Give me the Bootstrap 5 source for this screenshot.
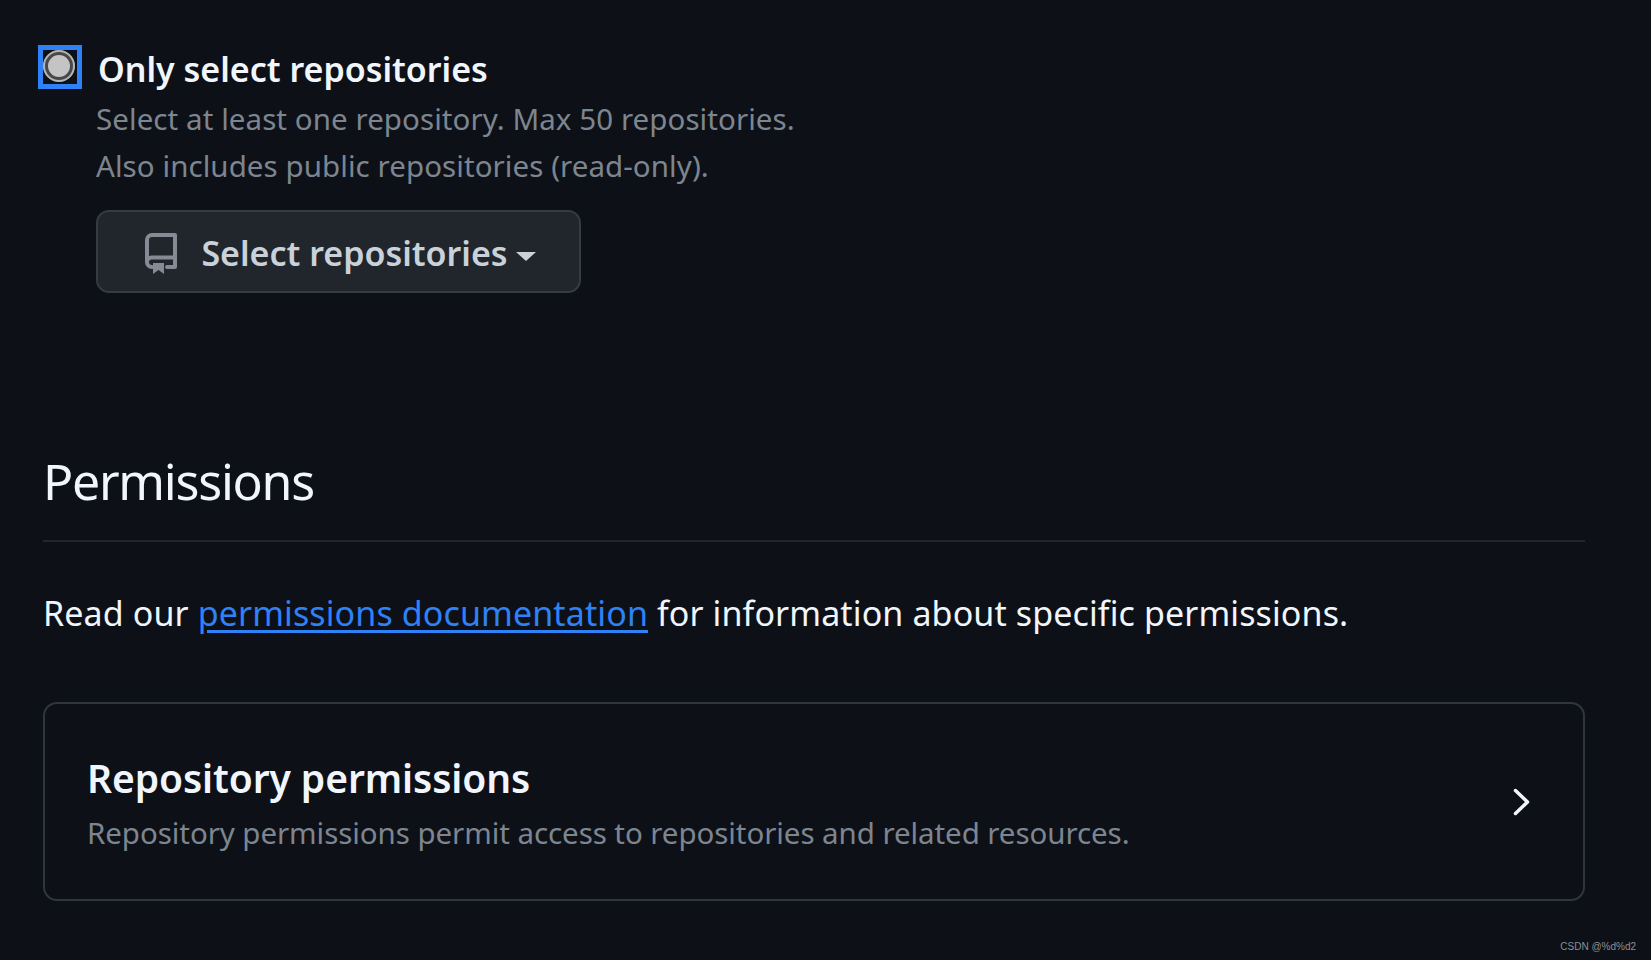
<!DOCTYPE html>
<html lang="en">
<head>
  <meta charset="UTF-8">
  <title>Permissions</title>
  <link href="https://cdn.jsdelivr.net/npm/bootstrap@5.3.3/dist/css/bootstrap.min.css" rel="stylesheet">
  <script src="https://cdn.jsdelivr.net/npm/bootstrap@5.3.3/dist/js/bootstrap.bundle.min.js"></script>
  <style>
    body {
      background: #0d1117;
      color: #f0f6fc;
      font-family: "Noto Sans", "Open Sans", sans-serif;
      min-height: 960px;
    }
    .page-wrap { padding: 45px 66px 0 43px; }
    .radio-box {
      width: 44px;
      height: 44px;
      border: 5px solid #2f81f7;
      background: #0d1117;
      flex: none;
      margin-left: -5px;
    }
    .radio-dot {
      width: 32px;
      height: 32px;
      border-radius: 50%;
      background: #c4c4c4;
      border: 5px solid #484848;
      outline: 2px solid #b4b4b4;
      outline-offset: -2px;
      margin: -2px 0 0 -2px;
    }
    .repo-title { font-size: 34px; font-weight: 600; line-height: 44px; margin: 2px 0 0 16px; }
    .repo-notes { margin: 4px 0 0 53px; }
    .repo-note { color: #7d8590; font-size: 29.5px; line-height: 47px; letter-spacing: .07px; }
    .repo-btn {
      margin: 21px 0 0 53px;
      padding: 4px 0 0 4px;
      width: 485px;
      height: 83px;
      background: #21262d;
      border: 2px solid #363b42;
      border-radius: 13px;
      color: #c9d1d9;
      font-size: 34px;
      font-weight: 600;
    }
    .repo-btn:hover { background: #21262d; color: #c9d1d9; border-color: #363b42; }
    .caret-down {
      width: 0;
      height: 0;
      border-left: 10px solid transparent;
      border-right: 10px solid transparent;
      border-top: 9px solid #c9d1d9;
      margin-top: 5px;
    }
    .perm-head {
      font-size: 50px;
      font-weight: 400;
      line-height: 68px;
      margin: 154px 0 0;
      padding-bottom: 25px;
      border-bottom: 2px solid #21262d;
      letter-spacing: -1.25px;
    }
    .perm-lead { font-size: 34px; line-height: 44px; margin: 49px 0 0; letter-spacing: .115px; }
    .perm-lead a { color: #2f81f7; text-underline-offset: 4px; }
    .perm-card {
      margin-top: 67px;
      height: 199px;
      background: transparent;
      border: 2px solid #30363d;
      border-radius: 14px;
      padding: 0 53px 0 42px;
      color: #f0f6fc;
    }
    .perm-text { padding-top: 2px; }
    .perm-title { font-size: 39px; font-weight: 600; line-height: 52px; margin: 0; letter-spacing: -.1px; }
    .perm-sub { color: #7d8590; font-size: 29.5px; line-height: 40px; margin: 9px 0 0; letter-spacing: -.07px; }
    .wm-text {
      position: absolute;
      right: 15px;
      bottom: 6px;
      font-family: "Liberation Sans", sans-serif;
      font-size: 10px;
      color: #8b8f96;
    }
  </style>
</head>
<body>

<div class="page-wrap">
  <div class="d-flex align-items-start">
    <div class="radio-box d-flex align-items-center justify-content-center">
      <div class="radio-dot"></div>
    </div>
    <div class="repo-title">Only select repositories</div>
  </div>
  <div class="repo-notes">
    <div class="repo-note">Select at least one repository. Max 50 repositories.</div>
    <div class="repo-note">Also includes public repositories (read-only).</div>
  </div>
  <button type="button" class="btn repo-btn d-flex align-items-center justify-content-center">
    <svg width="32" height="41" viewBox="0 0 32 41" fill="none" stroke="#848b94" stroke-width="4" stroke-linejoin="round" stroke-linecap="round" class="me-4">
      <path d="M7 34a5 5 0 0 1-5-5V7a5 5 0 0 1 5-5h23v32h-8"/>
      <path d="M2 29a4.500 4.500 0 0 1 4.500-4.500H30"/>
      <path d="M8 30h11v11l-5.500-4-5.500 4z" fill="#848b94" stroke="none"/>
    </svg>
    <span class="me-2">Select repositories</span>
    <span class="caret-down"></span>
  </button>

  <h2 class="perm-head">Permissions</h2>
  <p class="perm-lead">Read our <a href="#">permissions documentation</a> for information about specific permissions.</p>

  <div class="perm-card d-flex align-items-center justify-content-between">
    <div class="perm-text">
      <h3 class="perm-title">Repository permissions</h3>
      <p class="perm-sub">Repository permissions permit access to repositories and related resources.</p>
    </div>
    <svg width="17" height="28" viewBox="0 0 17 28" fill="none" stroke="#f0f6fc" stroke-width="3.500" stroke-linecap="round" stroke-linejoin="round">
      <path d="M2.500 2.500L14.500 14 2.500 25.500"/>
    </svg>
  </div>
</div>

<div class="wm-text">CSDN @%d%d2</div>

</body>
</html>
